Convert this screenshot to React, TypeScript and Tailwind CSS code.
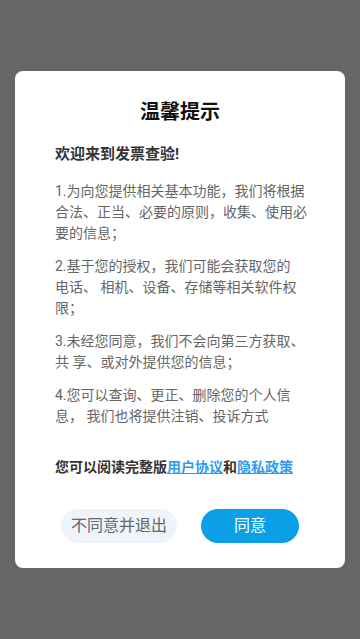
import React from 'react'

const paragraphs: string[][] = [
  ['1.为向您提供相关基本功能，我们将根据', '合法、正当、必要的原则，收集、使用必', '要的信息；'],
  ['2.基于您的授权，我们可能会获取您的', '电话、 相机、设备、存储等相关软件权', '限；'],
  ['3.未经您同意，我们不会向第三方获取、', '共 享、或对外提供您的信息；'],
  ['4.您可以查询、更正、删除您的个人信', '息， 我们也将提供注销、投诉方式'],
]

export default function App() {
  return (
    <div
      className="flex h-screen w-full items-center justify-center bg-[#666666]"
      style={{ fontFamily: 'Roboto, "Noto Sans CJK SC", sans-serif' }}
    >
      <div className="w-[330px] rounded-[8px] bg-white px-[40px] pt-[27px] pb-[25px]">
        <h1 className="text-center text-[20px] leading-[28px] font-bold text-[#111111]">温馨提示</h1>

        <p className="mt-[17px] text-[15px] leading-[22px] font-bold text-[#333333]">欢迎来到发票查验!</p>

        <div className="mt-[16px] space-y-[12px] text-[14px] leading-[21px] text-[#666666]">
          {paragraphs.map((lines, i) => (
            <p key={i} className="whitespace-pre">
              {lines.map((line, j) => (
                <span key={j} className="block">
                  {line}
                </span>
              ))}
            </p>
          ))}
        </div>

        <p className="mt-[30px] text-[14px] leading-[21px] font-bold whitespace-nowrap text-[#333333]">
          您可以阅读完整版
          <a className="text-[#2f9cf0] underline underline-offset-1">用户协议</a>和
          <a className="text-[#2f9cf0] underline underline-offset-1">隐私政策</a>
        </p>

        <div className="mt-[31px] flex justify-center gap-[24px]">
          <button className="h-[34px] w-[116px] rounded-full bg-[#eff4fb] text-[16px] text-[#666666]">
            不同意并退出
          </button>
          <button className="h-[34px] w-[98px] rounded-full bg-[#0a9fe7] text-[16px] text-white">同意</button>
        </div>
      </div>
    </div>
  )
}
